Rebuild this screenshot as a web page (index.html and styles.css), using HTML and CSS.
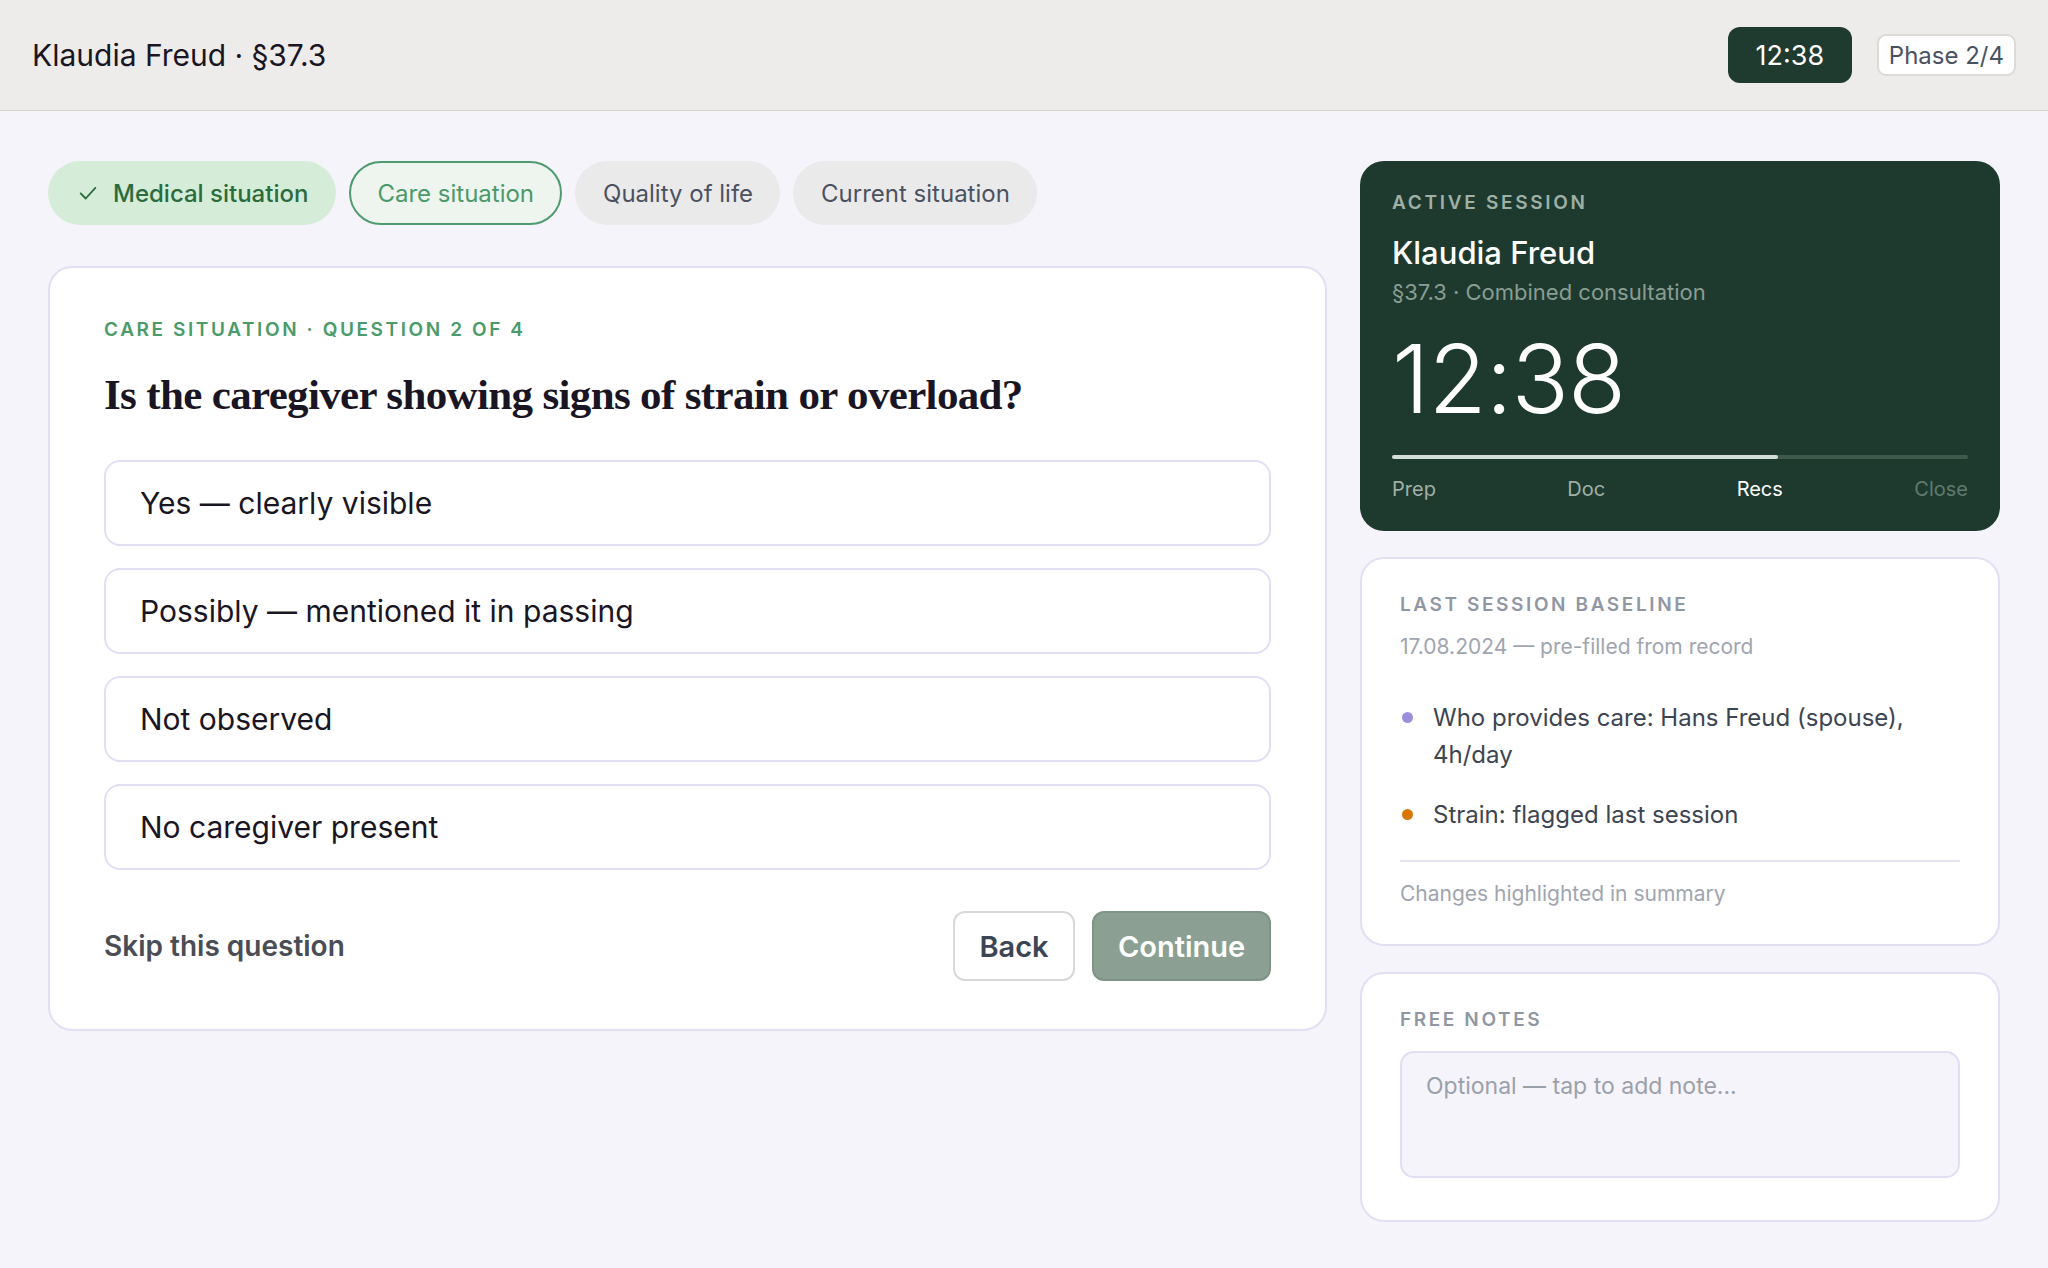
FILE: index.html
```html
<!DOCTYPE html>
<html lang="en">
<head>
    <meta charset="UTF-8">
    <meta name="viewport" content="width=device-width, initial-scale=1.0">
    <title>Care situation</title>
    <link rel="stylesheet" href="styles.css">
</head>
<body>

    <!-- Barra superior -->
    <header class="topbar">
        <div class="topbar-title">Klaudia Freud · §37.3</div>
        <div class="topbar-right">
            <span class="timer-pill">12:38</span>
            <span class="phase-pill">Phase 2/4</span>
        </div>
    </header>

    <main class="layout">
        <section class="left-col">
            <nav class="steps">
                <span class="step step-done">
                    <svg width="22" height="22" viewBox="0 0 24 24" fill="none" stroke="currentColor" stroke-width="2" stroke-linecap="round" stroke-linejoin="round"><polyline points="4 12.5 9.5 18 20 6.5"></polyline></svg>
                    Medical situation
                </span>
                <span class="step step-current">Care situation</span>
                <span class="step">Quality of life</span>
                <span class="step">Current situation</span>
            </nav>

            <div class="question-card">
                <div class="eyebrow">CARE SITUATION · QUESTION 2 OF 4</div>
                <h1 class="question">Is the caregiver showing signs of strain or overload?</h1>

                <div class="options">
                    <div class="option">Yes — clearly visible</div>
                    <div class="option">Possibly — mentioned it in passing</div>
                    <div class="option">Not observed</div>
                    <div class="option">No caregiver present</div>
                </div>

                <div class="card-footer">
                    <span class="skip">Skip this question</span>
                    <div class="actions">
                        <button class="btn btn-back">Back</button>
                        <button class="btn btn-continue">Continue</button>
                    </div>
                </div>
            </div>
        </section>

        <aside class="right-col">
            <div class="session-card">
                <div class="session-label">ACTIVE SESSION</div>
                <div class="session-name">Klaudia Freud</div>
                <div class="session-sub">§37.3 · Combined consultation</div>
                <div class="session-time">12:38</div>
                <div class="progress"><div class="progress-fill" style="width: 67%"></div></div>
                <div class="phases">
                    <span>Prep</span>
                    <span>Doc</span>
                    <span class="phase-active">Recs</span>
                    <span class="phase-future">Close</span>
                </div>
            </div>

            <div class="side-card">
                <div class="side-label">LAST SESSION BASELINE</div>
                <div class="side-meta">17.08.2024 — pre-filled from record</div>
                <ul class="baseline-list">
                    <li><span class="dot dot-purple"></span><span>Who provides care: Hans Freud (spouse), 4h/day</span></li>
                    <li><span class="dot dot-orange"></span><span>Strain: flagged last session</span></li>
                </ul>
                <div class="side-foot">Changes highlighted in summary</div>
            </div>

            <div class="side-card notes-card">
                <div class="side-label">FREE NOTES</div>
                <textarea class="notes" placeholder="Optional — tap to add note..."></textarea>
            </div>
        </aside>
    </main>

</body>
</html>
```

FILE: styles.css
```css
* { box-sizing: border-box; }

body {
    margin: 0;
    font-family: Inter, "Noto Sans", sans-serif;
    background-color: #f5f4fa;
    color: #1a1523;
}

/* Barra superior */
.topbar {
    height: 111px;
    background-color: #edecea;
    border-bottom: 1px solid #d6d3ce;
    display: flex;
    align-items: center;
    justify-content: space-between;
    padding: 0 32px 0 32px;
}
.topbar-title { font-size: 30px; color: #1a1523; }
.topbar-right { display: flex; align-items: center; gap: 25px; }
.timer-pill {
    background-color: #1f3a2f;
    color: #fff;
    font-size: 27px;
    width: 124px;
    height: 56px;
    border-radius: 12px;
    display: flex;
    align-items: center;
    justify-content: center;
}
.phase-pill {
    background-color: #fff;
    border: 2px solid #dcdad6;
    border-radius: 9px;
    color: #4a5262;
    font-size: 24px;
    height: 42px;
    padding: 0 10px;
    display: flex;
    align-items: center;
}

.layout {
    display: grid;
    grid-template-columns: 1279px 640px;
    gap: 33px;
    padding: 50px 48px;
    align-items: start;
}

/* Pasos */
.steps { display: flex; gap: 13px; margin-bottom: 41px; }
.step {
    height: 64px;
    border-radius: 32px;
    background-color: #ebeaea;
    color: #4a5262;
    font-size: 24px;
    padding: 0 27px 0 28px;
    display: flex;
    align-items: center;
    gap: 14px;
}
.step-done { background-color: #d4ecd8; color: #2b6b3c; padding: 0 28px 0 29px; font-weight: 500; }
.step-current { background-color: #eef5ef; color: #4a9a6a; border: 2px solid #4f9a6e; padding: 0 26px; }

/* Tarjeta de pregunta */
.question-card {
    background-color: #fff;
    border: 2px solid #e2def4;
    border-radius: 24px;
    padding: 50px 54px 48px;
}
.eyebrow {
    font-size: 19px;
    font-weight: 600;
    letter-spacing: 2.6px;
    color: #4a9a6a;
}
.question {
    font-family: "Liberation Serif", "DejaVu Serif", serif;
    font-weight: 700;
    font-size: 43px;
    letter-spacing: -0.65px;
    margin: 29px 0 41px;
    color: #1a1523;
}
.options { display: flex; flex-direction: column; gap: 22px; }
.option {
    height: 86px;
    border: 2px solid #e2def4;
    border-radius: 16px;
    display: flex;
    align-items: center;
    padding: 0 34px;
    font-size: 30px;
    color: #1a1523;
}
.card-footer {
    display: flex;
    align-items: center;
    justify-content: space-between;
    margin-top: 41px;
}
.skip { font-size: 28px; font-weight: 600; color: #4a4d55; }
.actions { display: flex; gap: 17px; }
.btn {
    height: 70px;
    border-radius: 12px;
    font-family: inherit;
    font-size: 29px;
    font-weight: 600;
    padding: 0 20px;
    cursor: pointer;
}
.btn-back { background-color: #fff; border: 2px solid #d8d8d8; color: #3b4556; width: 122px; }
.btn-continue { background-color: #8c9f93; border: 2px solid #7f9386; color: #fff; width: 179px; }

/* Columna derecha */
.right-col { display: flex; flex-direction: column; gap: 26px; }
.session-card {
    background-color: #1e3a2f;
    border-radius: 24px;
    padding: 30px 32px 30px;
    color: #fff;
}
.session-label { font-size: 19px; font-weight: 600; letter-spacing: 2.7px; color: #9fb0a6; }
.session-name { font-size: 31px; font-weight: 500; margin-top: 20px; }
.session-sub { font-size: 22px; color: #8a9d92; margin-top: 8px; }
.session-time { font-size: 95px; font-weight: 300; line-height: 1; margin-top: 26px; letter-spacing: -1px; }
.progress { height: 4px; background-color: #3e5a4d; border-radius: 2px; margin-top: 29px; }
.progress-fill { height: 100%; background-color: #d6dcd8; border-radius: 2px; }
.phases { display: flex; justify-content: space-between; font-size: 20px; color: #a0b0a6; margin-top: 18px; }
.phase-active { color: #fff; }
.phase-future { color: #5f7b6d; }

.side-card {
    background-color: #fff;
    border: 2px solid #e2def4;
    border-radius: 24px;
    padding: 34px 38px 38px;
}
.side-label { font-size: 19px; font-weight: 600; letter-spacing: 2.6px; color: #9097a3; }
.side-meta { font-size: 21px; color: #a0a5b0; margin-top: 18px; }
.baseline-list { list-style: none; margin: 40px 0 0; padding: 0; }
.baseline-list li { display: flex; gap: 20px; font-size: 24px; line-height: 37px; color: #3d4452; margin-bottom: 23px; }
.baseline-list li:last-child { margin-bottom: 27px; }
.dot { width: 11px; height: 11px; border-radius: 50%; margin-top: 13px; flex-shrink: 0; margin-left: 2px; }
.dot-purple { background-color: #9b8fdb; }
.dot-orange { background-color: #d97706; }
.side-foot { border-top: 2px solid #e6e3f2; padding-top: 19px; font-size: 21px; color: #a0a5b0; }

.notes-card { padding-bottom: 42px; }
.notes {
    display: block;
    width: 100%;
    height: 127px;
    margin-top: 20px;
    background-color: #f5f4fa;
    border: 2px solid #e2def4;
    border-radius: 14px;
    padding: 19px 24px;
    font-family: inherit;
    font-size: 23px;
    resize: none;
}
.notes::placeholder { color: #9aa0ab; }
```
